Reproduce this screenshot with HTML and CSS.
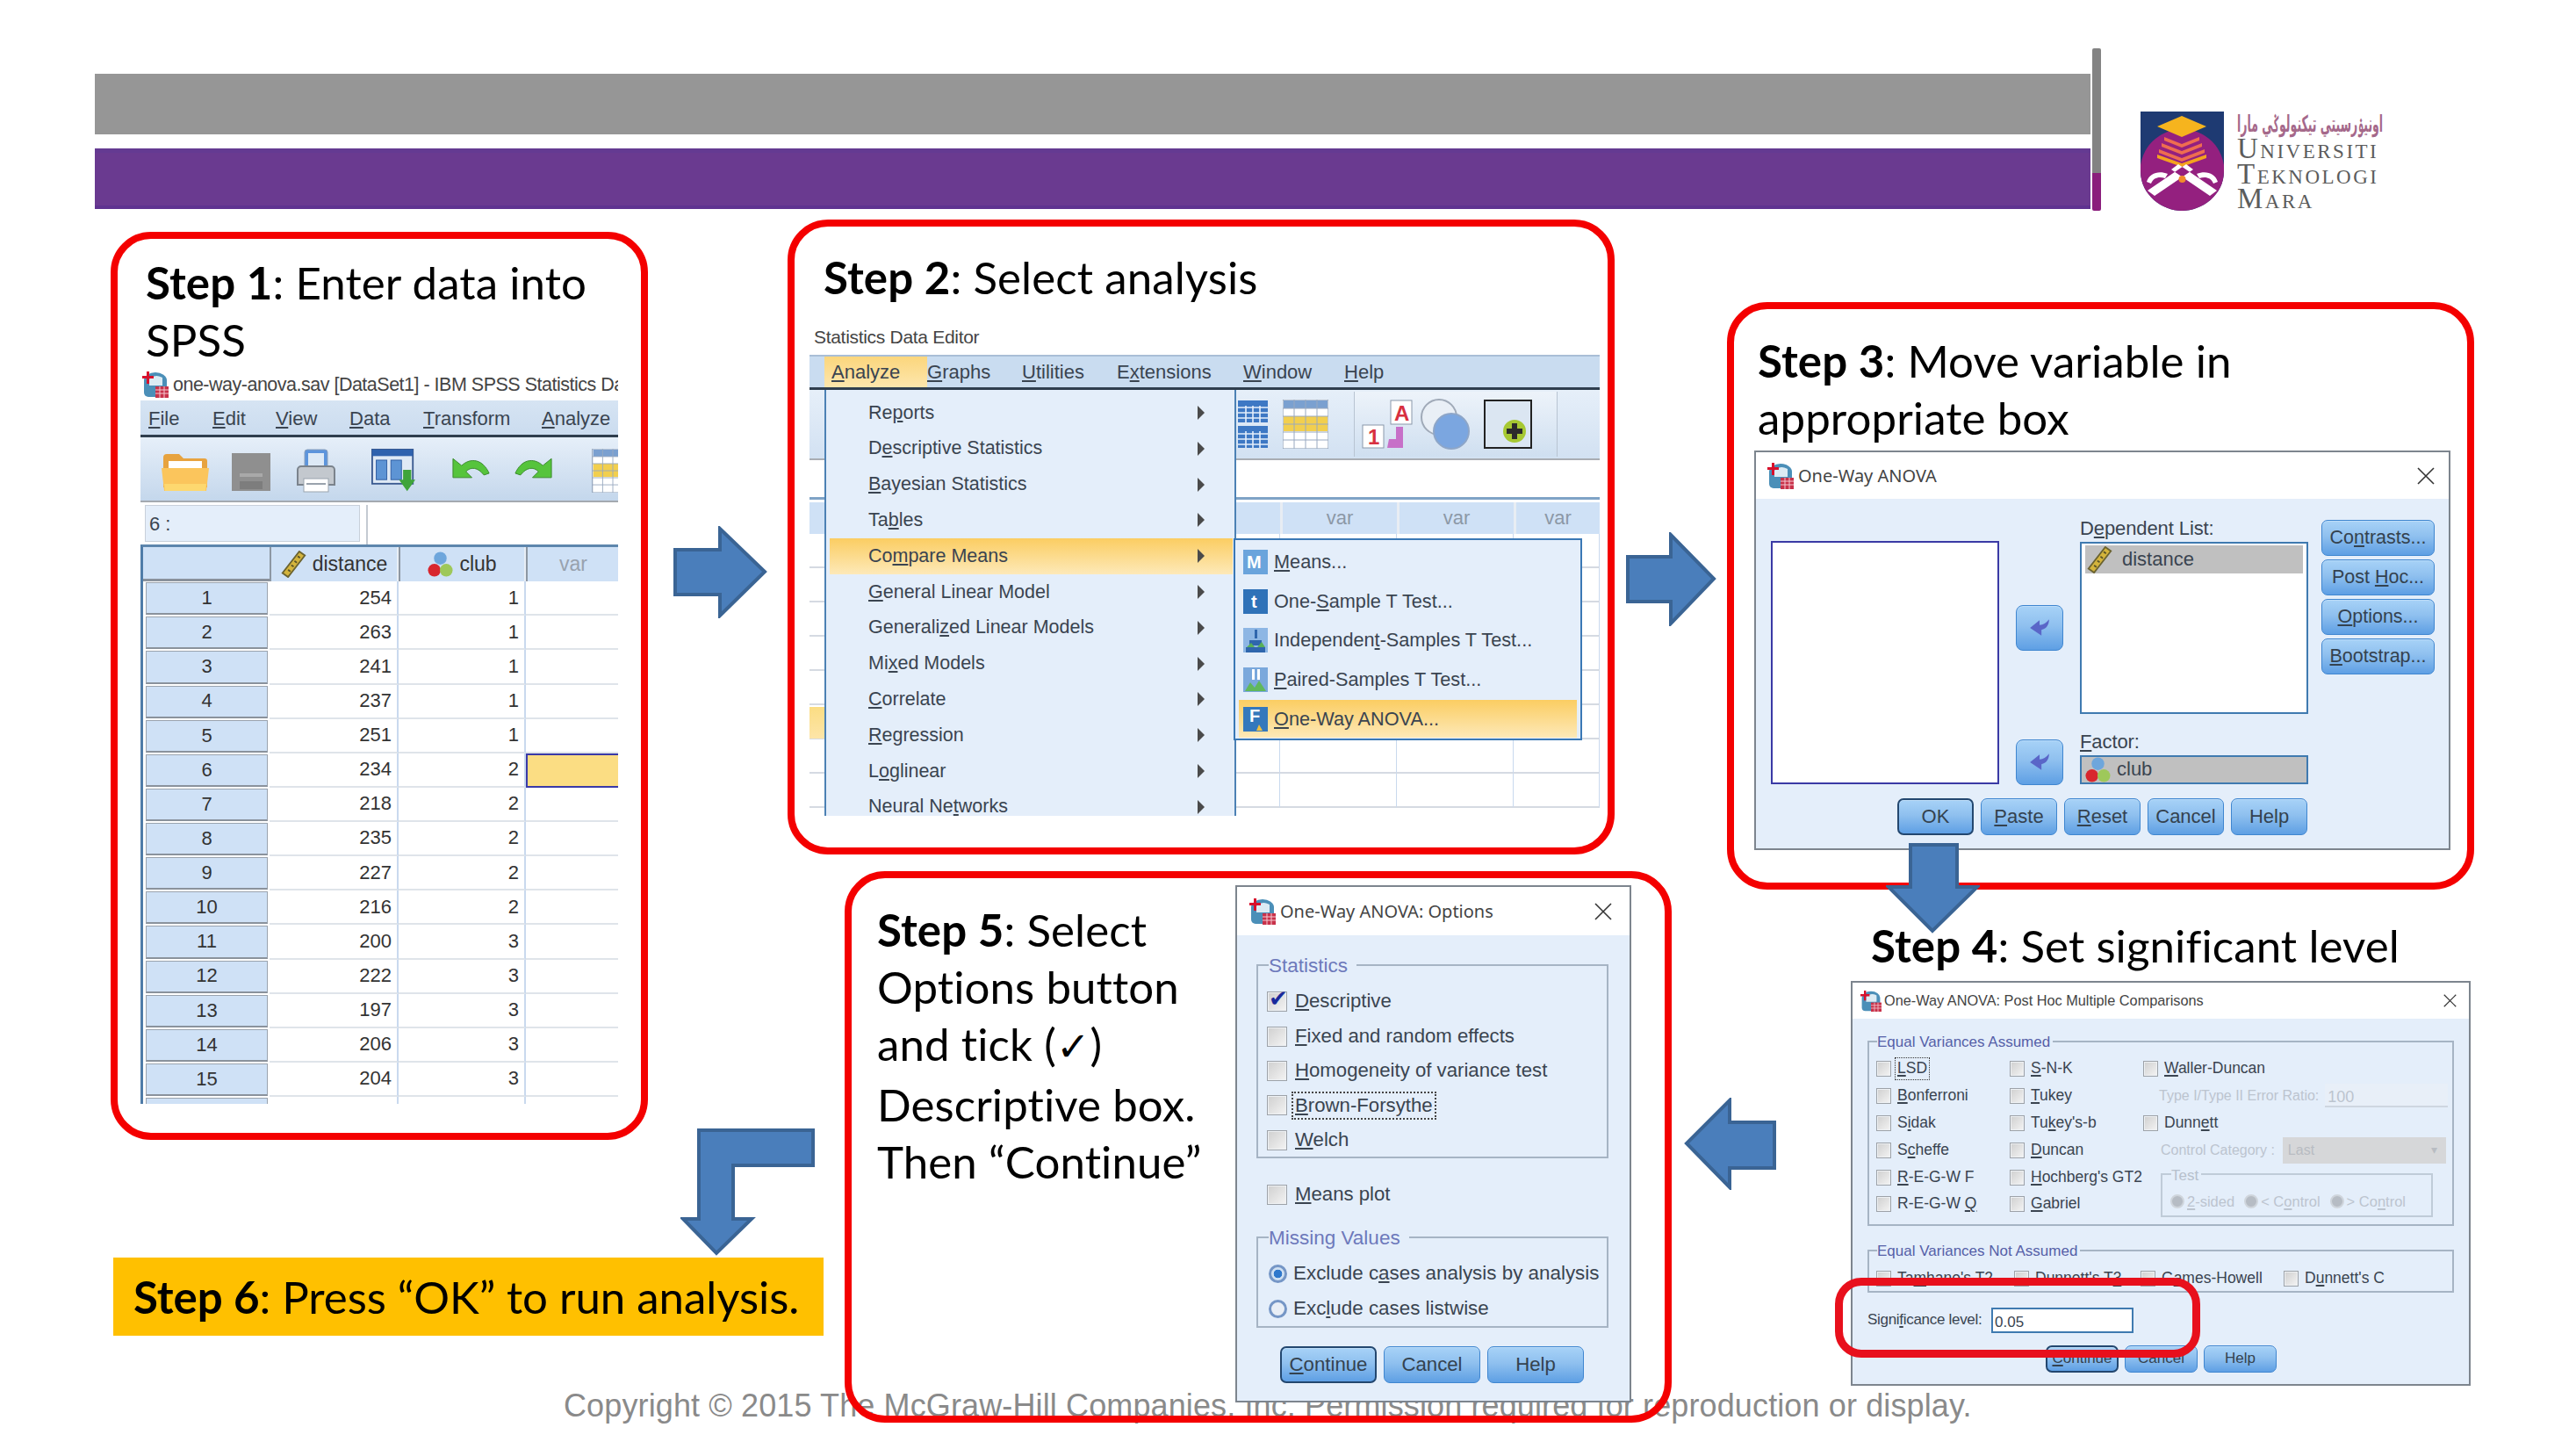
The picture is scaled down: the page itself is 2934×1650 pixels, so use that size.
FILE: index.html
```html
<!DOCTYPE html>
<html lang="en">
<head>
<meta charset="utf-8">
<title>One-Way ANOVA in SPSS</title>
<link rel="stylesheet" href="styles.css">
</head>
<body>
<svg class="defs" aria-hidden="true">
  <symbol id="i-spss" viewBox="0 0 30 30">
    <path d="M2 10a13 9 0 0 1 26 0v14a5 5 0 0 1-5 5H7a5 5 0 0 1-5-5z" fill="#4b8fb8"/>
    <path d="M8 9a9 6 0 0 1 15-2v9H8z" fill="#dcebf4"/>
    <path d="M5 0h3v5h5v3H8v6H5V8H0V5h5z" fill="#d8102c"/>
    <rect x="15" y="17" width="15" height="13" fill="#c8324a"/>
    <path d="M15 21h15M15 25h15M20 17v13M25 17v13" stroke="#f4c8d0" stroke-width="1"/>
  </symbol>
  <symbol id="i-ruler" viewBox="0 0 30 34">
    <path d="M22 1l7 5L8 33l-7-5z" fill="#d4b43c" stroke="#6b6330" stroke-width="2"/>
    <path d="M20 7l3 2M16 13l3 2M12 18l3 2M8 24l3 2" stroke="#5b5428" stroke-width="2"/>
  </symbol>
  <symbol id="i-balls" viewBox="0 0 30 30">
    <circle cx="15" cy="8" r="7.5" fill="#6ea6dc"/>
    <circle cx="8" cy="22" r="7.5" fill="#d8262e"/>
    <circle cx="22" cy="22" r="7.5" fill="#9ec85a"/>
  </symbol>
  <symbol id="i-back" viewBox="0 0 24 24">
    <path d="M22 3c0 6-3 10-8 11v6L2 12l10-8v5c4 0 7-2 10-6z" fill="#5a66c8"/>
  </symbol>
  <symbol id="i-folder" viewBox="0 0 54 50">
    <path d="M2 10a4 4 0 0 1 4-4h14l5 5h24a3 3 0 0 1 3 3v30H2z" fill="#e7a33f"/>
    <rect x="8" y="14" width="38" height="8" fill="#fff"/>
    <path d="M0 22h54l-3 26H3z" fill="#fbc55c"/>
    <path d="M3 40h48l-1 8H4z" fill="#fdd86f"/>
  </symbol>
  <symbol id="i-floppy" viewBox="0 0 46 50">
    <rect x="1" y="5" width="44" height="43" fill="#8f8f8f"/>
    <rect x="10" y="28" width="26" height="4" fill="#a9a9a9"/>
    <rect x="10" y="37" width="26" height="9" fill="#7d7d7d"/>
  </symbol>
  <symbol id="i-printer" viewBox="0 0 46 50">
    <rect x="10" y="1" width="26" height="22" rx="3" fill="#5c94dc" stroke="#8aa0bc"/>
    <rect x="14" y="5" width="18" height="14" fill="#dde9f6"/>
    <path d="M2 24a4 4 0 0 1 4-4h34a4 4 0 0 1 4 4v17H2z" fill="#c3c8ce" stroke="#7b838c" stroke-width="2"/>
    <rect x="9" y="34" width="28" height="15" fill="#fff" stroke="#9aa3ad"/>
    <path d="M12 40h22" stroke="#9aa3ad" stroke-width="2"/>
  </symbol>
  <symbol id="i-dataset" viewBox="0 0 54 54">
    <rect x="1" y="1" width="50" height="42" fill="#dfe9f5" stroke="#3a5a90" stroke-width="2"/>
    <rect x="1" y="1" width="50" height="8" fill="#2f62ae"/>
    <rect x="6" y="14" width="13" height="24" fill="#5d94d4" stroke="#2c5aa0"/>
    <rect x="24" y="14" width="13" height="24" fill="#5d94d4" stroke="#2c5aa0"/>
    <path d="M39 26h10v12h5L44 52 34 38h5z" fill="#3fa43a"/>
  </symbol>
  <symbol id="i-undo" viewBox="0 0 48 36">
    <path d="M3 4v22h22l-7-7c6-6 14-5 21 4l6-2C38 5 24 2 13 12z" fill="#56c43c" stroke="#3a8a2c"/>
  </symbol>
  <symbol id="i-redo" viewBox="0 0 48 36">
    <path d="M45 4v22H23l7-7c-6-6-14-5-21 4l-6-2C10 5 24 2 35 12z" fill="#56c43c" stroke="#3a8a2c"/>
  </symbol>
  <symbol id="i-gridblue" viewBox="0 0 34 54">
    <rect width="34" height="25" fill="#3d78c4"/>
    <rect y="29" width="34" height="25" fill="#3d78c4"/>
    <path d="M0 8h34M0 14h34M0 20h34M0 38h34M0 44h34M0 50h34M9 6v19M17 6v19M25 6v19M9 35v19M17 35v19M25 35v19" stroke="#e4eefa" stroke-width="1.6"/>
  </symbol>
  <symbol id="i-gridyellow" viewBox="0 0 52 56">
    <rect width="52" height="56" fill="#fff" stroke="#7a8ea8"/>
    <rect x="1" y="1" width="50" height="9" fill="#7aa0d0"/>
    <rect x="1" y="19" width="50" height="17" fill="#f2cf4e"/>
    <path d="M0 10h52M0 19h52M0 28h52M0 37h52M0 46h52M13 0v56M26 0v56M39 0v56" stroke="#98a8c0" stroke-width="1"/>
  </symbol>
  <symbol id="i-circles" viewBox="0 0 58 60">
    <circle cx="22" cy="22" r="20" fill="#e9eff6" stroke="#a0aab8" stroke-width="2"/>
    <circle cx="36" cy="38" r="20" fill="#7ba6e0" stroke="#8ea6c8" stroke-width="2"/>
  </symbol>
  <symbol id="i-addon" viewBox="0 0 55 56">
    <rect x="1" y="1" width="53" height="54" fill="#dbe6f2" stroke="#222" stroke-width="2"/>
    <circle cx="35" cy="36" r="13" fill="#a6c832"/>
    <path d="M32 27h6v6h6v6h-6v6h-6v-6h-6v-6h6z" fill="#2b2b2b"/>
  </symbol>
  <symbol id="i-ind" viewBox="0 0 28 28"><rect width="28" height="28" fill="#8db6e4"/><path d="M13 2h3v10h-3zM7 14h14v6H7zM3 22h22v6H3z" fill="#2f66ad"/><path d="M4 22l5-5 4 5zM16 22l5-6 4 6z" fill="#58b058"/></symbol>
  <symbol id="i-pair" viewBox="0 0 28 28"><rect width="28" height="28" fill="#7aa8dc"/><path d="M10 2h3v12h-3zM16 2h3v12h-3z" fill="#fff"/><path d="M2 27l6-10 5 6 5-8 8 12z" fill="#60b85c"/></symbol>
  <symbol id="i-x" viewBox="0 0 20 20"><path d="M1 1L19 19M19 1L1 19" stroke="#333" stroke-width="1.6" fill="none"/></symbol>
</svg>

<main class="slide">
  <div class="bar bar-gray"></div>
  <div class="bar bar-purple"></div>
  <div class="divider"></div>

  <div class="logo">
    <svg class="logo-crest" viewBox="0 0 95 113">
      <defs><clipPath id="crest-clip"><path d="M0 0H95V68C95 95 70 113 47 113 25 113 0 95 0 68Z"/></clipPath></defs>
      <g clip-path="url(#crest-clip)">
        <rect width="95" height="113" fill="#1e3a72"/>
        <circle cx="47.5" cy="68" r="48" fill="#94207f"/>
        <path d="M47 5l28 12-28 12-28-12z" fill="#f6b41e"/>
        <path d="M27 29l20 8 20-8v4l-20 8-20-8zM24 36l23 9 23-9v4l-23 9-23-9zM21 43l26 10 26-10v4L47 57 21 47z" fill="#ee6d50"/>
        <path d="M19 49l28 10 28-10v4L47 63 19 53z" fill="#f4a31e"/>
        <path d="M8 90l44-30 8 6-44 30zM87 90L43 60l-8 6 44 30z" fill="#fff"/>
        <path d="M7 80c3-10 14-13 24-9l-3 5c-7-2-13-1-16 6zM88 80c-3-10-14-13-24-9l3 5c7-2 13-1 16 6z" fill="#fff"/>
        <circle cx="47.5" cy="77" r="4" fill="#f08b2b"/>
      </g>
    </svg>
    <div class="logo-words">
      <div class="logo-jawi" dir="rtl" lang="ms-Arab">اونيۏرسيتي تيكنولوݢي مارا</div>
      <div class="logo-name">Universiti</div>
      <div class="logo-name">Teknologi</div>
      <div class="logo-name">Mara</div>
    </div>
  </div>

  <p class="copyright">Copyright © 2015 The McGraw-Hill Companies, Inc. Permission required for reproduction or display.</p>

  <!-- STEP 1 -->
  <section class="panel panel-1">
    <h2 class="step step-1"><b>Step 1</b>: Enter data into<br>SPSS</h2>
    <div class="ui editor">
      <div class="win-line"><svg class="i-title"><use href="#i-spss"/></svg><span>one-way-anova.sav [DataSet1] - IBM SPSS Statistics Data Editor</span></div>
      <nav class="menubar menubar-1">
        <span><u>F</u>ile</span><span><u>E</u>dit</span><span><u>V</u>iew</span><span><u>D</u>ata</span><span><u>T</u>ransform</span><span><u>A</u>nalyze</span>
      </nav>
      <div class="toolbar toolbar-1">
        <svg class="tb tb-folder"><use href="#i-folder"/></svg>
        <svg class="tb tb-floppy"><use href="#i-floppy"/></svg>
        <svg class="tb tb-printer"><use href="#i-printer"/></svg>
        <svg class="tb tb-dataset"><use href="#i-dataset"/></svg>
        <svg class="tb tb-undo"><use href="#i-undo"/></svg>
        <svg class="tb tb-redo"><use href="#i-redo"/></svg>
        <svg class="tb tb-grid"><use href="#i-gridyellow"/></svg>
      </div>
      <div class="cellbar"><span class="cell-name">6 :</span><span class="cell-value"></span></div>
      <div class="sheet">
        <div class="hd hd-corner"></div>
        <div class="hd"><svg class="i-var"><use href="#i-ruler"/></svg>distance</div>
        <div class="hd"><svg class="i-var"><use href="#i-balls"/></svg>club</div>
        <div class="hd hd-var">var</div>
        <div class="rh">1</div><div class="num">254</div><div class="num">1</div><div class="blank"></div>
        <div class="rh">2</div><div class="num">263</div><div class="num">1</div><div class="blank"></div>
        <div class="rh">3</div><div class="num">241</div><div class="num">1</div><div class="blank"></div>
        <div class="rh">4</div><div class="num">237</div><div class="num">1</div><div class="blank"></div>
        <div class="rh">5</div><div class="num">251</div><div class="num">1</div><div class="blank"></div>
        <div class="rh">6</div><div class="num">234</div><div class="num">2</div><div class="blank sel"></div>
        <div class="rh">7</div><div class="num">218</div><div class="num">2</div><div class="blank"></div>
        <div class="rh">8</div><div class="num">235</div><div class="num">2</div><div class="blank"></div>
        <div class="rh">9</div><div class="num">227</div><div class="num">2</div><div class="blank"></div>
        <div class="rh">10</div><div class="num">216</div><div class="num">2</div><div class="blank"></div>
        <div class="rh">11</div><div class="num">200</div><div class="num">3</div><div class="blank"></div>
        <div class="rh">12</div><div class="num">222</div><div class="num">3</div><div class="blank"></div>
        <div class="rh">13</div><div class="num">197</div><div class="num">3</div><div class="blank"></div>
        <div class="rh">14</div><div class="num">206</div><div class="num">3</div><div class="blank"></div>
        <div class="rh">15</div><div class="num">204</div><div class="num">3</div><div class="blank"></div>
        <div class="rh"></div><div class="num"></div><div class="num"></div><div class="blank"></div>
      </div>
    </div>
  </section>

  <!-- STEP 2 -->
  <section class="panel panel-2">
    <h2 class="step step-2"><b>Step 2</b>: Select analysis</h2>
    <div class="ui editor2">
      <div class="win-line win-line-2">Statistics Data Editor</div>
      <nav class="menubar menubar-2">
        <span class="m-active"><span><u>A</u>nalyze</span></span><span><span><u>G</u>raphs</span></span><span><span><u>U</u>tilities</span></span><span><span>E<u>x</u>tensions</span></span><span><span><u>W</u>indow</span></span><span><span><u>H</u>elp</span></span>
      </nav>
      <div class="toolbar toolbar-2">
        <svg class="tb2 tb2-blue"><use href="#i-gridblue"/></svg>
        <svg class="tb2 tb2-yellow"><use href="#i-gridyellow"/></svg>
        <span class="tb2-group">
          <svg class="tb2 tb2-a1" viewBox="0 0 60 58">
            <rect x="34" y="2" width="24" height="27" fill="#fff" stroke="#8a98aa"/>
            <text x="38" y="25" class="icon-letter-a">A</text>
            <rect x="2" y="30" width="24" height="26" fill="#fff" stroke="#8a98aa"/>
            <text x="8" y="52" class="icon-letter-a">1</text>
            <path d="M32 46h8V32h8v24H30z" fill="#c770c8"/>
          </svg>
          <svg class="tb2 tb2-circles"><use href="#i-circles"/></svg>
          <svg class="tb2 tb2-addon"><use href="#i-addon"/></svg>
        </span>
      </div>
      <div class="formula"></div>
      <div class="sheet2">
        <div class="hd2 hd2-first"></div><div class="hd2">var</div><div class="hd2">var</div><div class="hd2">var</div>
        <div class="c2"></div><div class="c2"></div><div class="c2"></div><div class="c2"></div>
        <div class="c2"></div><div class="c2"></div><div class="c2"></div><div class="c2"></div>
        <div class="c2"></div><div class="c2"></div><div class="c2"></div><div class="c2"></div>
        <div class="c2"></div><div class="c2"></div><div class="c2"></div><div class="c2"></div>
        <div class="c2"></div><div class="c2"></div><div class="c2"></div><div class="c2"></div>
        <div class="c2"><i class="sel-stub"></i></div><div class="c2"></div><div class="c2"></div><div class="c2"></div>
        <div class="c2"></div><div class="c2"></div><div class="c2"></div><div class="c2"></div>
        <div class="c2"></div><div class="c2"></div><div class="c2"></div><div class="c2"></div>
      </div>
      <div class="menu">
        <div class="menu-item"><span>Re<u>p</u>orts</span><i class="caret"></i></div>
        <div class="menu-item"><span>D<u>e</u>scriptive Statistics</span><i class="caret"></i></div>
        <div class="menu-item"><span><u>B</u>ayesian Statistics</span><i class="caret"></i></div>
        <div class="menu-item"><span>Ta<u>b</u>les</span><i class="caret"></i></div>
        <div class="menu-item is-hot"><span>Co<u>m</u>pare Means</span><i class="caret"></i></div>
        <div class="menu-item"><span><u>G</u>eneral Linear Model</span><i class="caret"></i></div>
        <div class="menu-item"><span>Generali<u>z</u>ed Linear Models</span><i class="caret"></i></div>
        <div class="menu-item"><span>Mi<u>x</u>ed Models</span><i class="caret"></i></div>
        <div class="menu-item"><span><u>C</u>orrelate</span><i class="caret"></i></div>
        <div class="menu-item"><span><u>R</u>egression</span><i class="caret"></i></div>
        <div class="menu-item"><span>L<u>o</u>glinear</span><i class="caret"></i></div>
        <div class="menu-item"><span>Neural Ne<u>t</u>works</span><i class="caret"></i></div>
      </div>
      <div class="submenu">
        <div class="sub-item"><svg class="i-sub" viewBox="0 0 28 28"><rect width="28" height="28" fill="#6aa4dc"/><text x="4" y="21" class="icon-letter-w">M</text></svg><span><u>M</u>eans...</span></div>
        <div class="sub-item"><svg class="i-sub" viewBox="0 0 28 28"><rect width="28" height="28" fill="#2f72b8"/><text x="9" y="21" class="icon-letter-w">t</text></svg><span>One-<u>S</u>ample T Test...</span></div>
        <div class="sub-item"><svg class="i-sub"><use href="#i-ind"/></svg><span>Independen<u>t</u>-Samples T Test...</span></div>
        <div class="sub-item"><svg class="i-sub"><use href="#i-pair"/></svg><span><u>P</u>aired-Samples T Test...</span></div>
        <div class="sub-item is-hot"><svg class="i-sub" viewBox="0 0 28 28"><rect width="28" height="28" fill="#3578bc"/><text x="7" y="17" class="icon-letter-w">F</text><path d="M15 27l3-7 4 7z" fill="#f0c040"/></svg><span><u>O</u>ne-Way ANOVA...</span></div>
      </div>
    </div>
  </section>

  <!-- STEP 3 -->
  <section class="panel panel-3">
    <h2 class="step step-3"><b>Step 3</b>: Move variable in<br>appropriate box</h2>
    <div class="ui dlg dlg-anova">
      <header class="dlg-title"><svg class="i-dlg"><use href="#i-spss"/></svg><span>One-Way ANOVA</span><svg class="dlg-x"><use href="#i-x"/></svg></header>
      <div class="anova-main">
        <div class="list list-source"></div>
        <div class="arrow-col">
          <button class="btn btn-arrow"><svg class="i-back"><use href="#i-back"/></svg></button>
          <button class="btn btn-arrow"><svg class="i-back"><use href="#i-back"/></svg></button>
        </div>
        <div class="target-col">
          <label class="target-label">D<u>e</u>pendent List:</label>
          <div class="list list-dep"><div class="list-row"><svg class="i-var"><use href="#i-ruler"/></svg>distance</div></div>
          <label class="target-label target-label-factor"><u>F</u>actor:</label>
          <div class="list list-factor"><svg class="i-var"><use href="#i-balls"/></svg>club</div>
        </div>
        <div class="side-btns">
          <button class="btn btn-side">Co<u>n</u>trasts...</button>
          <button class="btn btn-side">Post <u>H</u>oc...</button>
          <button class="btn btn-side"><u>O</u>ptions...</button>
          <button class="btn btn-side"><u>B</u>ootstrap...</button>
        </div>
      </div>
      <div class="anova-actions">
        <button class="btn btn-act is-default">OK</button>
        <button class="btn btn-act"><u>P</u>aste</button>
        <button class="btn btn-act"><u>R</u>eset</button>
        <button class="btn btn-act">Cancel</button>
        <button class="btn btn-act">Help</button>
      </div>
    </div>
  </section>

  <!-- STEP 4 -->
  <h2 class="step step-4"><b>Step 4</b>: Set significant level</h2>
  <div class="ui dlg dlg-posthoc">
    <header class="dlg-title dlg-title-small"><svg class="i-dlg-small"><use href="#i-spss"/></svg><span>One-Way ANOVA: Post Hoc Multiple Comparisons</span><svg class="dlg-x dlg-x-small"><use href="#i-x"/></svg></header>
    <div class="group ph-group-1">
      <span class="legend">Equal Variances Assumed</span>
      <div class="ph-grid">
        <span class="ck"><i class="box"></i><span class="focused-small"><u>L</u>SD</span></span>
        <span class="ck"><i class="box"></i><span><u>S</u>-N-K</span></span>
        <span class="ck"><i class="box"></i><span><u>W</u>aller-Duncan</span></span>
        <span class="ck"><i class="box"></i><span><u>B</u>onferroni</span></span>
        <span class="ck"><i class="box"></i><span><u>T</u>ukey</span></span>
        <span class="off ratio"><span>Type I/Type II Error Ratio:</span><span class="off-input">100</span></span>
        <span class="ck"><i class="box"></i><span>S<u>i</u>dak</span></span>
        <span class="ck"><i class="box"></i><span>Tu<u>k</u>ey's-b</span></span>
        <span class="ck"><i class="box"></i><span>Dunn<u>e</u>tt</span></span>
        <span class="ck"><i class="box"></i><span>S<u>c</u>heffe</span></span>
        <span class="ck"><i class="box"></i><span><u>D</u>uncan</span></span>
        <span class="off ratio ratio-cat"><span>Control Category :</span><span class="off-select"><span>Last</span><span class="off-arrow">▾</span></span></span>
        <span class="ck"><i class="box"></i><span><u>R</u>-E-G-W F</span></span>
        <span class="ck"><i class="box"></i><span><u>H</u>ochberg's GT2</span></span>
        <div class="group test-group off">
          <span class="legend legend-off">Test</span>
          <span class="test-radio"><i class="radio-off"></i><span><u>2</u>-sided</span></span>
          <span class="test-radio"><i class="radio-off"></i><span>&lt; C<u>o</u>ntrol</span></span>
          <span class="test-radio"><i class="radio-off"></i><span>&gt; Co<u>n</u>trol</span></span>
        </div>
        <span class="ck"><i class="box"></i><span>R-E-G-W <u>Q</u></span></span>
        <span class="ck"><i class="box"></i><span><u>G</u>abriel</span></span>
      </div>
    </div>
    <div class="group ph-group-2">
      <span class="legend">Equal Variances Not Assumed</span>
      <div class="ph-row">
        <span class="ck"><i class="box"></i><span>Ta<u>m</u>hane's T2</span></span>
        <span class="ck"><i class="box"></i><span>Dunnett's T<u>3</u></span></span>
        <span class="ck"><i class="box"></i><span>G<u>a</u>mes-Howell</span></span>
        <span class="ck"><i class="box"></i><span>D<u>u</u>nnett's C</span></span>
      </div>
    </div>
    <div class="sig-row"><span class="sig-label">Signi<u>f</u>icance level:</span><span class="sig-input">0.05</span></div>
    <div class="ph-actions">
      <button class="btn btn-ph is-default"><u>C</u>ontinue</button>
      <button class="btn btn-ph">Cancel</button>
      <button class="btn btn-ph">Help</button>
    </div>
  </div>
  <div class="sig-ring"></div>

  <!-- STEP 5 -->
  <section class="panel panel-5">
    <h2 class="step step-5"><b>Step 5</b>: Select<br>Options button<br>and tick (<span class="tick">✓</span>)<br>Descriptive box.<br>Then “Continue”</h2>
    <div class="ui dlg dlg-options">
      <header class="dlg-title dlg-title-opt"><svg class="i-dlg"><use href="#i-spss"/></svg><span>One-Way ANOVA: Options</span><svg class="dlg-x"><use href="#i-x"/></svg></header>
      <div class="group opt-stats">
        <span class="legend legend-opt">Statistics</span>
        <div class="opt-row"><i class="box box-lg is-checked"></i><span><u>D</u>escriptive</span></div>
        <div class="opt-row"><i class="box box-lg"></i><span><u>F</u>ixed and random effects</span></div>
        <div class="opt-row"><i class="box box-lg"></i><span><u>H</u>omogeneity of variance test</span></div>
        <div class="opt-row"><i class="box box-lg"></i><span class="focused"><u>B</u>rown-Forsythe</span></div>
        <div class="opt-row"><i class="box box-lg"></i><span><u>W</u>elch</span></div>
      </div>
      <div class="opt-row opt-means"><i class="box box-lg"></i><span><u>M</u>eans plot</span></div>
      <div class="group opt-missing">
        <span class="legend legend-opt">Missing Values</span>
        <div class="opt-row"><i class="radio is-on"></i><span>Exclude c<u>a</u>ses analysis by analysis</span></div>
        <div class="opt-row"><i class="radio"></i><span>Exc<u>l</u>ude cases listwise</span></div>
      </div>
      <div class="opt-actions">
        <button class="btn btn-opt is-default"><u>C</u>ontinue</button>
        <button class="btn btn-opt">Cancel</button>
        <button class="btn btn-opt">Help</button>
      </div>
    </div>
  </section>

  <!-- STEP 6 -->
  <div class="step6"><span class="step step-6"><b>Step 6</b>: Press “OK” to run analysis.</span></div>

  <!-- ARROWS -->
  <svg class="arrow arrow-1" viewBox="0 0 107 105"><polygon points="2,27 53,27 53,3 104,52 53,102 53,78 2,78"/></svg>
  <svg class="arrow arrow-2" viewBox="0 0 103 107"><polygon points="2,28 51,28 51,3 100,53 51,104 51,79 2,79"/></svg>
  <svg class="arrow arrow-3" viewBox="0 0 105 105"><polygon points="103,28 52,28 52,3 3,52 52,102 52,80 103,80"/></svg>
  <svg class="arrow arrow-4" viewBox="0 0 107 103"><polygon points="28,2 81,2 81,50 104,50 53,100 3,50 28,50"/></svg>
  <svg class="arrow arrow-5" viewBox="0 0 153 145"><polygon points="151,2 21,2 21,103 3,103 41,142 81,103 60,103 60,42 151,42"/></svg>
</main>
</body>
</html>
```
FILE: styles.css
```css
* { box-sizing: border-box; }
html, body { margin: 0; padding: 0; background: #fff; }
.defs { position: absolute; width: 0; height: 0; }
svg { display: block; }
u { text-underline-offset: 2px; text-decoration-thickness: 1.5px; }
button { font: inherit; color: inherit; margin: 0; padding: 0; }

.slide { position: relative; width: 2934px; height: 1650px; overflow: hidden; background: #fff; }

/* header bars */
.bar { position: absolute; left: 108px; width: 2273px; height: 69px; }
.bar-gray { top: 84px; background: #969696; }
.bar-purple { top: 169px; background: #6a3a90; box-shadow: inset 0 5px 0 #643a92, inset 0 -4px 0 #5f3290; }
.divider { position: absolute; left: 2383px; top: 55px; width: 10px; height: 185px; border-radius: 2px; background: linear-gradient(#838383 0 77%, #8a1e7c 77%); }

/* logo */
.logo { position: absolute; left: 2438px; top: 127px; display: flex; gap: 15px; }
.logo-crest { width: 95px; height: 113px; }
.logo-words { display: flex; flex-direction: column; width: 170px; font-family: "Liberation Serif", serif; color: #5c5c5c; }
.logo-jawi { width: max-content; height: 28px; font: 700 26px/28px "DejaVu Sans", sans-serif; color: #a5688a; white-space: nowrap; transform-origin: 0 50%; transform: scaleX(.48); }
.logo-name { font-size: 33px; line-height: 28.5px; font-variant: small-caps; letter-spacing: 2.5px; white-space: nowrap; text-transform: lowercase; }
.logo-name::first-letter { text-transform: uppercase; }

/* copyright */
.copyright { position: absolute; left: 642px; top: 1580px; margin: 0; font: 36px/42px "Liberation Sans", sans-serif; color: #8a8a8a; white-space: nowrap; letter-spacing: .12px; }

/* panels */
.panel { position: absolute; background: #fff; border: 8px solid #f40000; border-radius: 46px; }
.panel-1 { left: 126px; top: 264px; width: 612px; height: 1034px; padding-top: 17px; }
.panel-2 { left: 897px; top: 250px; width: 942px; height: 723px; padding-top: 25px; }
.panel-3 { left: 1967px; top: 344px; width: 851px; height: 669px; padding-top: 26px; }
.panel-5 { left: 962px; top: 992px; width: 942px; height: 628px; padding: 8px 0 0 29px; display: flex; background: transparent; }

.step { margin: 0; font: 400 51px/65px Lato, "DejaVu Sans", sans-serif; color: #000; white-space: nowrap; letter-spacing: .1px; }
.step b { font-weight: 700; }
.step-1 { margin-left: 32px; }
.step-2 { margin-left: 33px; }
.step-3 { margin-left: 27px; }
.step-4 { position: absolute; left: 2131px; top: 1044px; }
.step-5 { width: 408px; margin-top: 18px; flex: none; }
.step-6 { letter-spacing: -.05px; }
.tick { font-family: "DejaVu Sans", sans-serif; font-weight: 700; font-size: 46px; }

/* shared UI */
.ui { font: 22px/1.1 "Liberation Sans", sans-serif; color: #3a4450; }

/* editor screenshot, step 1 */
.editor { width: 544px; height: 837px; margin-left: 26px; margin-top: 1px; overflow: hidden; }
.win-line { height: 36px; display: flex; align-items: center; gap: 5px; padding-left: 2px; white-space: nowrap; font: 21.5px "Liberation Sans", sans-serif; color: #444; overflow: hidden; letter-spacing: -.5px; }
.i-title { width: 30px; height: 30px; flex: none; }
.menubar { display: flex; align-items: center; background: linear-gradient(#d6e4f3, #cbdcef); border-bottom: 3px solid #2f3e4e; white-space: nowrap; }
.menubar-1 { height: 42px; padding: 3px 0 0 9px; }
.menubar-1 span:nth-child(1) { width: 73px; }
.menubar-1 span:nth-child(2) { width: 72px; }
.menubar-1 span:nth-child(3) { width: 84px; }
.menubar-1 span:nth-child(4) { width: 84px; }
.menubar-1 span:nth-child(5) { width: 135px; }
.toolbar { display: flex; align-items: center; }
.toolbar-1 { height: 74px; padding-top: 4px; background: linear-gradient(#e6eff9, #c4d7ec); border-bottom: 2px solid #a4a9b0; }
.tb { height: 50px; flex: none; }
.tb-folder { width: 54px; margin-left: 24px; }
.tb-floppy { width: 46px; margin-left: 25px; }
.tb-printer { width: 46px; margin-left: 28px; }
.tb-dataset { width: 54px; margin-left: 38px; }
.tb-undo { width: 47px; height: 36px; margin-left: 38px; }
.tb-redo { width: 47px; height: 36px; margin-left: 24px; }
.tb-grid { width: 52px; margin-left: 41px; }
.cellbar { height: 48px; display: flex; gap: 7px; padding: 3px 0 0 5px; background: #fff; }
.cell-name { width: 245px; height: 42px; line-height: 42px; padding-left: 4px; background: #e4eefa; border: 1px solid #c8d0da; }
.cell-value { flex: 1; border-left: 2px solid #c4cad2; background: #fff; }

.sheet { display: grid; grid-template-columns: 144px 147px 145px 108px; grid-auto-rows: 39.13px; border-top: 3px solid #5d86ad; border-left: 3px solid #4f7ca8; }
.hd { height: 39.13px; display: flex; align-items: center; justify-content: center; gap: 7px; background: #cfe1f6; border-left: 2px solid #8d97a3; border-right: 2px solid #e8eef5; white-space: nowrap; color: #333; font-size: 23px; }
.hd-corner { border: 0; border-bottom: 3px solid #8a929c; }
.hd-var { color: #98a2ae; }
.i-var { width: 29px; height: 31px; flex: none; }
.rh { display: flex; align-items: center; justify-content: center; margin: 1px 2px 1px 3px; background: #cfe1f6; border: 1px solid #9aa3ae; border-bottom: 2px solid #8a929c; color: #333; }
.num { display: flex; align-items: center; justify-content: flex-end; padding-right: 6px; color: #333; border-bottom: 2px solid #dfe4ea; border-right: 2px solid #c9d9ee; }
.blank { border-bottom: 2px solid #dfe4ea; }
.sel { background: #fbdd83; border: 2px solid #3a3aa8; border-right: 0; }

/* editor screenshot, step 2 */
.editor2 { position: relative; width: 900px; height: 559px; margin-left: 17px; margin-top: 22px; overflow: hidden; }
.win-line-2 { height: 34px; padding: 0 0 6px 5px; font-size: 21px; letter-spacing: -.3px; }
.menubar-2 { height: 40px; padding-left: 17px; background: #c9dcf0; border-top: 2px solid #a9bed6; }
.menubar-2 > span { display: flex; align-items: center; height: 100%; padding-top: 2px; }
.menubar-2 > span:nth-child(1) { width: 117px; padding-left: 8px; }
.menubar-2 > span:nth-child(2) { width: 108px; }
.menubar-2 > span:nth-child(3) { width: 108px; }
.menubar-2 > span:nth-child(4) { width: 144px; }
.menubar-2 > span:nth-child(5) { width: 115px; }
.m-active { background: linear-gradient(#fbd67c, #fde6ad); }
.toolbar-2 { height: 80px; padding-left: 488px; gap: 17px; background: linear-gradient(#e6eff9, #d2e1f2); border-bottom: 2px solid #a9adb3; }
.tb2-blue { width: 34px; height: 54px; }
.tb2-yellow { width: 52px; height: 56px; }
.tb2-group { display: flex; align-items: center; gap: 6px; height: 74px; padding: 0 28px 0 6px; margin-left: 12px; background: linear-gradient(#edf3fa, #cfdff0); border-left: 1px solid #b8c4d2; border-right: 1px solid #b8c4d2; }
.tb2-a1 { width: 62px; height: 58px; }
.tb2-circles { width: 58px; height: 60px; }
.tb2-addon { width: 55px; height: 56px; margin-left: 9px; }
.formula { height: 42px; background: #fff; }
.sheet2 { display: grid; grid-template-columns: 536px 133px 133px 98px; grid-auto-rows: 39px; border-top: 3px solid #7fa3c6; }
.hd2 { height: 36px; margin-top: 3px; display: flex; align-items: center; justify-content: center; background: #cfe1f6; border-left: 3px solid #e8edf3; color: #8c98a6; }
.hd2-first { border-left: 0; }
.c2 { border-right: 1px solid #c9d9ee; border-bottom: 2px solid #d5dae2; }
.sel-stub { display: block; width: 17px; height: 36px; margin-top: 2px; background: linear-gradient(#fbdd83, #fde5a8); }

.menu { position: absolute; left: 17px; top: 74px; width: 469px; height: 485px; padding-top: 6px; background: #e4eefa; border-left: 2px solid #4c81b4; border-right: 2px solid #4c81b4; display: flex; flex-direction: column; font-size: 21.5px; }
.menu-item { flex: 0 0 40.8px; position: relative; display: flex; align-items: center; padding-left: 48px; white-space: nowrap; }
.caret { position: absolute; left: 423px; top: 12px; width: 0; height: 0; border-left: 8px solid #4a4a4a; border-top: 8px solid transparent; border-bottom: 8px solid transparent; }
.is-hot { background: linear-gradient(#fbcd62, #fde9b8); }
.menu-item.is-hot { margin: 0 2px 0 4px; padding-left: 44px; }
.menu-item.is-hot .caret { left: 419px; }
.submenu { position: absolute; left: 483px; top: 243px; width: 397px; height: 230px; padding: 3px 4px 0; background: #e4eefa; border: 2px solid #3a78b5; display: flex; flex-direction: column; font-size: 21.7px; }
.sub-item { flex: 0 0 44.5px; display: flex; align-items: center; gap: 7px; padding-left: 5px; white-space: nowrap; }
.sub-item.is-hot { flex-basis: 43px; margin-top: 1px; }
.i-sub { width: 28px; height: 28px; flex: none; }
.icon-letter-w { font: 700 20px "Liberation Sans", sans-serif; fill: #fff; }
.icon-letter-a { font: 700 24px "Liberation Sans", sans-serif; fill: #d83040; }

/* dialogs */
.dlg { background: #e4eefa; border: 2px solid #7d858e; }
.dlg-title { display: flex; align-items: center; gap: 5px; background: #fff; white-space: nowrap; font-family: "Noto Sans", sans-serif; color: #444; }
.dlg-x { margin-left: auto; width: 20px; height: 20px; flex: none; }
.i-dlg { width: 30px; height: 30px; flex: none; }
.i-dlg-small { width: 24px; height: 24px; flex: none; }
.btn { display: block; border: 1px solid #3f86d0; border-radius: 7px; background: linear-gradient(#a7d2f7, #8fc0ef 45%, #5e9fe4); color: #34424f; white-space: nowrap; text-align: center; box-shadow: inset 0 1px 0 #bcdcf8; }
.btn.is-default { border: 2px solid #23476f; }

/* step 3 dialog */
.dlg-anova { width: 793px; height: 455px; margin-left: 23px; margin-top: 5px; }
.dlg-anova .dlg-title { height: 53px; padding: 0 16px 0 13px; font-size: 20px; }
.anova-main { display: flex; padding: 24px 0 0 17px; }
.list { background: #fff; border: 2px solid #3f7ab0; }
.list-source { width: 260px; height: 277px; margin-top: 24px; border-color: #3a3aa5; }
.arrow-col { display: flex; flex-direction: column; gap: 101px; margin: 97px 19px 0; }
.btn-arrow { width: 54px; height: 52px; display: flex; align-items: center; justify-content: center; border-radius: 8px; }
.i-back { width: 26px; height: 26px; }
.target-col { display: flex; flex-direction: column; width: 260px; }
.target-label { height: 25px; line-height: 20px; white-space: nowrap; letter-spacing: -.1px; }
.target-label-factor { height: 47px; line-height: 64px; }
.list-dep { height: 196px; padding: 2px 4px; }
.list-row { height: 32px; display: flex; align-items: center; gap: 11px; padding-left: 2px; background: #c0c0c0; }
.list-factor { height: 33px; display: flex; align-items: center; gap: 7px; padding-left: 4px; background: #c0c0c0; }
.side-btns { display: flex; flex-direction: column; gap: 4px; margin-left: 15px; }
.btn-side { width: 129px; height: 41px; font-size: 21.5px; }
.anova-actions { display: flex; gap: 8px; margin: 15px 0 0 161px; }
.btn-act { width: 87px; height: 42px; }

/* groups */
.group { position: relative; border: 2px solid #a6b4c4; }
.legend { position: absolute; left: 9px; top: -12px; padding: 0 3px 0 0; background: #e4eefa; color: #5560a8; white-space: nowrap; font-size: 17px; line-height: 24px; }
.legend-off { color: #b6c0cc; top: -11px; left: 10px; font-size: 17px; }
.legend-opt { left: 12px; top: -14px; padding: 0 10px 0 0; font-size: 22.5px; line-height: 28px; color: #6d79bb; }

/* step 4 dialog */
.dlg-posthoc { position: absolute; left: 2108px; top: 1117px; width: 706px; height: 461px; font-size: 17.5px; }
.dlg-title-small { height: 41px; padding: 0 14px 0 9px; font-size: 16.3px; gap: 3px; font-family: "Liberation Sans", sans-serif; }
.dlg-x-small { width: 15px; height: 15px; }
.ph-group-1 { width: 668px; height: 211px; margin: 25px 0 0 17px; padding: 15px 0 0 8px; }
.ph-grid { display: grid; grid-template-columns: 152px 152px 338px; grid-template-rows: 30px 31px 31px 31px 31px 30px; }
.ck { display: flex; align-items: center; gap: 7px; white-space: nowrap; }
.box { display: block; flex: none; width: 17px; height: 18px; border: 1px solid #9da2a8; background: linear-gradient(135deg, #cfcfcf, #f4f4f4); box-shadow: inset 0 0 0 1px #eef1f4; }
.focused-small { outline: 1px dotted #333; outline-offset: 2px; }
.off { color: #bcc4cf; }
.ratio { display: flex; align-items: center; gap: 7px; white-space: nowrap; padding-left: 18px; font-size: 16px; }
.ratio-cat { padding-left: 20px; gap: 9px; }
.off-input { flex: none; width: 140px; height: 27px; line-height: 30px; padding-left: 3px; border-bottom: 2px solid #ced6e0; background: #e8eff8; font-size: 18px; }
.off-select { flex: none; width: 186px; height: 30px; display: flex; align-items: center; justify-content: space-between; padding: 0 10px 0 6px; background: #d6d7d9; color: #b8bcc2; }
.off-arrow { font-size: 14px; }
.test-group { grid-column: 3; grid-row: 5 / span 2; margin: 0 8px 0 20px; display: flex; align-items: flex-end; gap: 11px; padding: 0 0 5px 9px; border-color: #bfcbd8; white-space: nowrap; height: 50px; align-self: end; font-size: 16.5px; }
.test-radio { display: flex; align-items: center; gap: 3px; height: 22px; }
.radio-off { display: block; flex: none; width: 16px; height: 16px; border-radius: 50%; background: #b6bcc4; border: 2px solid #cfd5dc; }
.ph-group-2 { width: 668px; height: 49px; margin: 27px 0 0 17px; padding: 21px 0 0 8px; }
.ph-row { display: grid; grid-template-columns: 157px 144px 163px 150px; }
.sig-row { display: flex; align-items: center; margin: 17px 0 0 17px; }
.sig-label { width: 141px; white-space: nowrap; font-size: 17px; letter-spacing: -.3px; }
.sig-input { width: 162px; height: 29px; line-height: 30px; padding-left: 2px; background: #fff; border: 2px solid #3f7ab0; font-size: 17px; }
.ph-actions { display: flex; gap: 7px; margin: 14px 0 0 220px; }
.btn-ph { width: 83px; height: 31px; font-size: 17px; }
.sig-ring { position: absolute; left: 2090px; top: 1455px; width: 416px; height: 91px; border: 9px solid #e8101c; border-radius: 30px; }

/* step 5 dialog */
.dlg-options { width: 451px; height: 589px; margin-left: 0; flex: none; font-size: 22.2px; padding: 0 24px 0 22px; }
.dlg-title-opt { height: 55px; margin: 0 -24px 0 -22px; padding: 0 20px 0 14px; font-size: 20px; }
.opt-stats { height: 221px; margin-top: 33px; padding: 21px 0 0 10px; }
.opt-row { height: 39.4px; display: flex; align-items: center; gap: 9px; white-space: nowrap; }
.box-lg { width: 23px; height: 23px; position: relative; }
.is-checked::after { content: "✔"; position: absolute; left: 1px; top: -8px; font: 26px "DejaVu Sans", sans-serif; color: #1a2a9c; }
.focused { outline: 2px dotted #444; outline-offset: 2px; }
.opt-means { margin: 22px 0 0 12px; }
.opt-missing { height: 104px; margin-top: 28px; padding: 20px 0 0 12px; }
.opt-missing .opt-row { height: 40px; gap: 7px; font-size: 22.4px; }
.radio { display: block; flex: none; width: 21px; height: 21px; border-radius: 50%; background: #e8eef6; border: 3px solid #7596c6; }
.radio.is-on { background: radial-gradient(circle, #2f78cc 0 44%, #cfe0f2 48%); }
.opt-actions { display: flex; gap: 8px; margin: 21px 0 0 27px; }
.btn-opt { width: 110px; height: 42px; }

/* step 6 */
.step6 { position: absolute; left: 129px; top: 1432px; width: 809px; height: 89px; display: flex; align-items: center; padding-left: 23px; background: #ffc000; }

/* arrows */
.arrow { position: absolute; }
.arrow polygon { fill: #4a7ebb; stroke: #3a6494; stroke-width: 4; }
.arrow-1 { left: 767px; top: 599px; width: 107px; height: 105px; }
.arrow-2 { left: 1852px; top: 606px; width: 103px; height: 107px; }
.arrow-3 { left: 1918px; top: 1250px; width: 105px; height: 105px; }
.arrow-4 { left: 2148px; top: 960px; width: 107px; height: 103px; }
.arrow-5 { left: 775px; top: 1285px; width: 153px; height: 145px; }
```
